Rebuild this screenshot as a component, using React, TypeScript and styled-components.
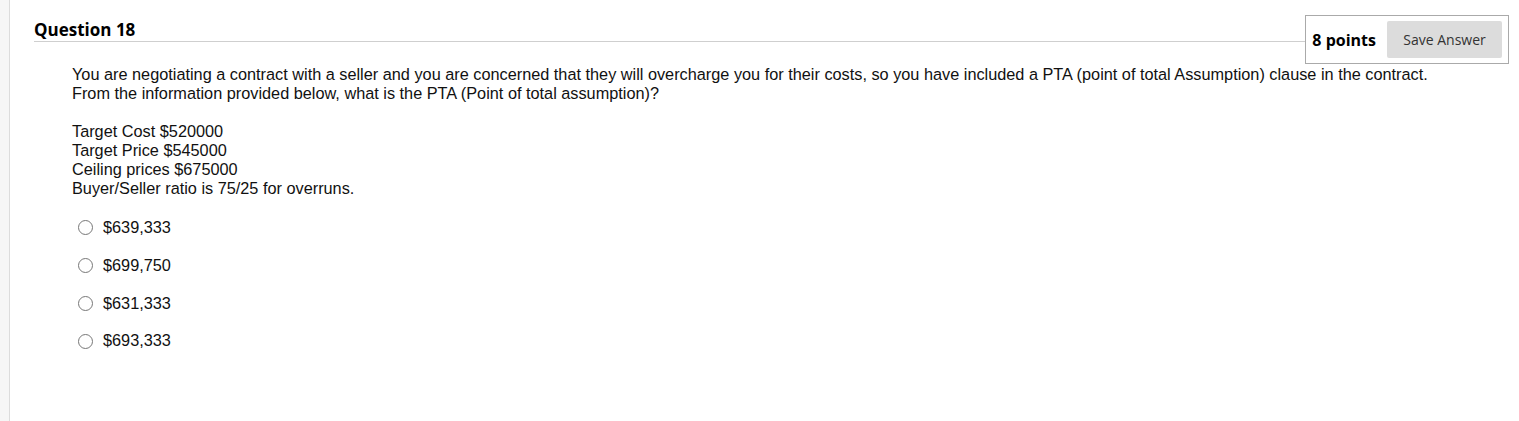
import styled, { createGlobalStyle } from 'styled-components';

const GlobalStyle = createGlobalStyle`
  html, body {
    margin: 0;
    padding: 0;
    background: #fff;
  }
`;

const Page = styled.div`
  display: flex;
  width: 1519px;
  height: 421px;
  overflow: hidden;
`;

const SideStrip = styled.div`
  width: 9px;
  flex-shrink: 0;
  background: #f6f6f6;
  border-right: 1px solid #dcdcdc;
`;

const Content = styled.div`
  flex: 1;
  padding: 15px 10px 0 24px;
`;

const Header = styled.div`
  display: flex;
  align-items: flex-start;
`;

const Title = styled.h2`
  flex: 1;
  margin: 5px 0 0 0;
  padding-bottom: 1px;
  border-bottom: 1px solid #cfcfcf;
  font-family: 'Open Sans', sans-serif;
  font-size: 17px;
  font-weight: 700;
  line-height: 20px;
  color: #000;
`;

const PointsBox = styled.div`
  display: flex;
  align-items: center;
  gap: 11px;
  padding: 5px 6px;
  border: 1px solid #aaa;
  height: 37px;
`;

const Points = styled.span`
  font-family: 'Open Sans', sans-serif;
  font-size: 16px;
  font-weight: 700;
  color: #000;
`;

const SaveButton = styled.button`
  width: 115px;
  height: 37px;
  border: none;
  border-radius: 2px;
  background: #dcdcdc;
  font-family: 'Open Sans', sans-serif;
  font-size: 14px;
  color: #333;
  padding: 0;
`;

const Body = styled.div`
  padding-left: 38px;
  margin-top: 1px;
  font-family: 'Liberation Sans', Arial, sans-serif;
  font-size: 16.3px;
  line-height: 19.3px;
  color: #111;
`;

const Paragraph = styled.p`
  margin: 0 0 18px 0;
`;

const Facts = styled.div`
  margin-bottom: 19px;
`;

const Options = styled.ul`
  list-style: none;
  margin: 0;
  padding: 0 0 0 6px;
  display: flex;
  flex-direction: column;
  gap: 18.6px;
`;

const Option = styled.li`
  display: flex;
  align-items: center;
  gap: 10px;
`;

const Radio = styled.span`
  width: 15px;
  height: 15px;
  border-radius: 50%;
  border: 1px solid #777;
  box-sizing: border-box;
  flex-shrink: 0;
`;

const answers = ['$639,333', '$699,750', '$631,333', '$693,333'];

const App = () => {
  return (
    <>
      <GlobalStyle />
      <Page>
        <SideStrip />
        <Content>
          <Header>
            <Title>Question 18</Title>
            <PointsBox>
              <Points>8 points</Points>
              <SaveButton>Save Answer</SaveButton>
            </PointsBox>
          </Header>
          <Body>
            <Paragraph>
              You are negotiating a contract with a seller and you are concerned that they will
              overcharge you for their costs, so you have included a PTA (point of total Assumption)
              clause in the contract.
              <br />
              From the information provided below, what is the PTA (Point of total assumption)?
            </Paragraph>
            <Facts>
              Target Cost $520000
              <br />
              Target Price $545000
              <br />
              Ceiling prices $675000
              <br />
              Buyer/Seller ratio is 75/25 for overruns.
            </Facts>
            <Options>
              {answers.map((a) => (
                <Option key={a}>
                  <Radio />
                  <span>{a}</span>
                </Option>
              ))}
            </Options>
          </Body>
        </Content>
      </Page>
    </>
  );
};

export default App;
